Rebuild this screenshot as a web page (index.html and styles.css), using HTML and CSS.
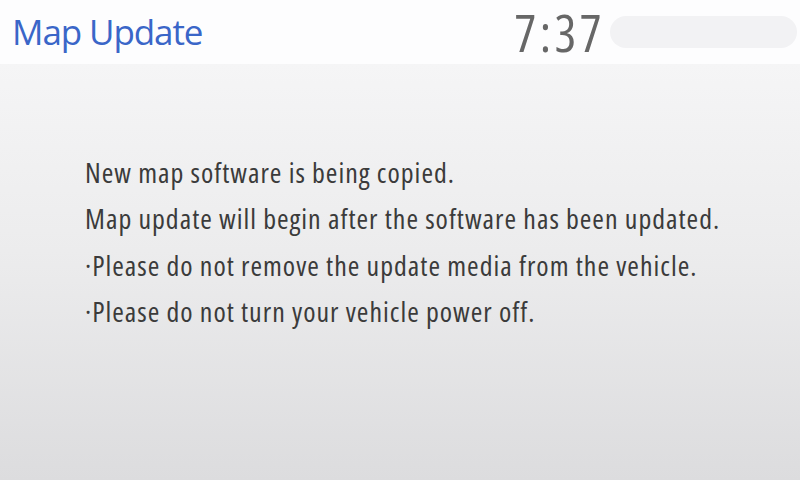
FILE: index.html
```html
<!DOCTYPE html>
<html lang="en">
<head>
<meta charset="utf-8">
<title>Map Update</title>
<link rel="stylesheet" href="styles.css">
</head>
<body>
<div class="screen">
  <header class="header">
    <h1 class="title">Map Update</h1>
    <div class="status">
      <span class="clock">7:37</span>
      <span class="pill"></span>
    </div>
  </header>
  <main class="content">
    <p class="line">New map software is being copied.</p>
    <p class="line">Map update will begin after the software has been updated.</p>
    <p class="line">·Please do not remove the update media from the vehicle.</p>
    <p class="line">·Please do not turn your vehicle power off.</p>
  </main>
</div>
</body>
</html>
```
FILE: styles.css
```css
html, body {
  margin: 0;
  padding: 0;
}
body {
  width: 800px;
  height: 480px;
  overflow: hidden;
  font-family: "Open Sans", "Noto Sans", sans-serif;
}
.screen {
  display: flex;
  flex-direction: column;
  width: 800px;
  height: 480px;
}
.header {
  height: 64px;
  flex: none;
  display: flex;
  align-items: center;
  justify-content: space-between;
  background: #fdfdfe;
  padding: 0 3px 0 12px;
  box-sizing: border-box;
}
.title {
  margin: 0;
  font-weight: 400;
  font-size: 35px;
  line-height: 64px;
  letter-spacing: -1.1px;
  color: #3a66c8;
}
.status {
  display: flex;
  align-items: center;
  gap: 5px;
}
.clock {
  display: block;
  font-size: 51px;
  line-height: 62px;
  font-stretch: 75%;
  letter-spacing: 3.5px;
  color: #676767;
}
.pill {
  display: block;
  width: 187px;
  height: 32px;
  border-radius: 16px;
  background: #f2f2f4;
}
.content {
  flex: 1;
  background: linear-gradient(to bottom, #f5f5f6 0%, #ececed 45%, #dcdcde 100%);
  padding: 85px 0 0 85px;
}
.line {
  margin: 0;
  font-size: 28px;
  line-height: 46.3px;
  font-stretch: 75%;
  letter-spacing: 1px;
  color: #3b3b3b;
  white-space: nowrap;
}
```
